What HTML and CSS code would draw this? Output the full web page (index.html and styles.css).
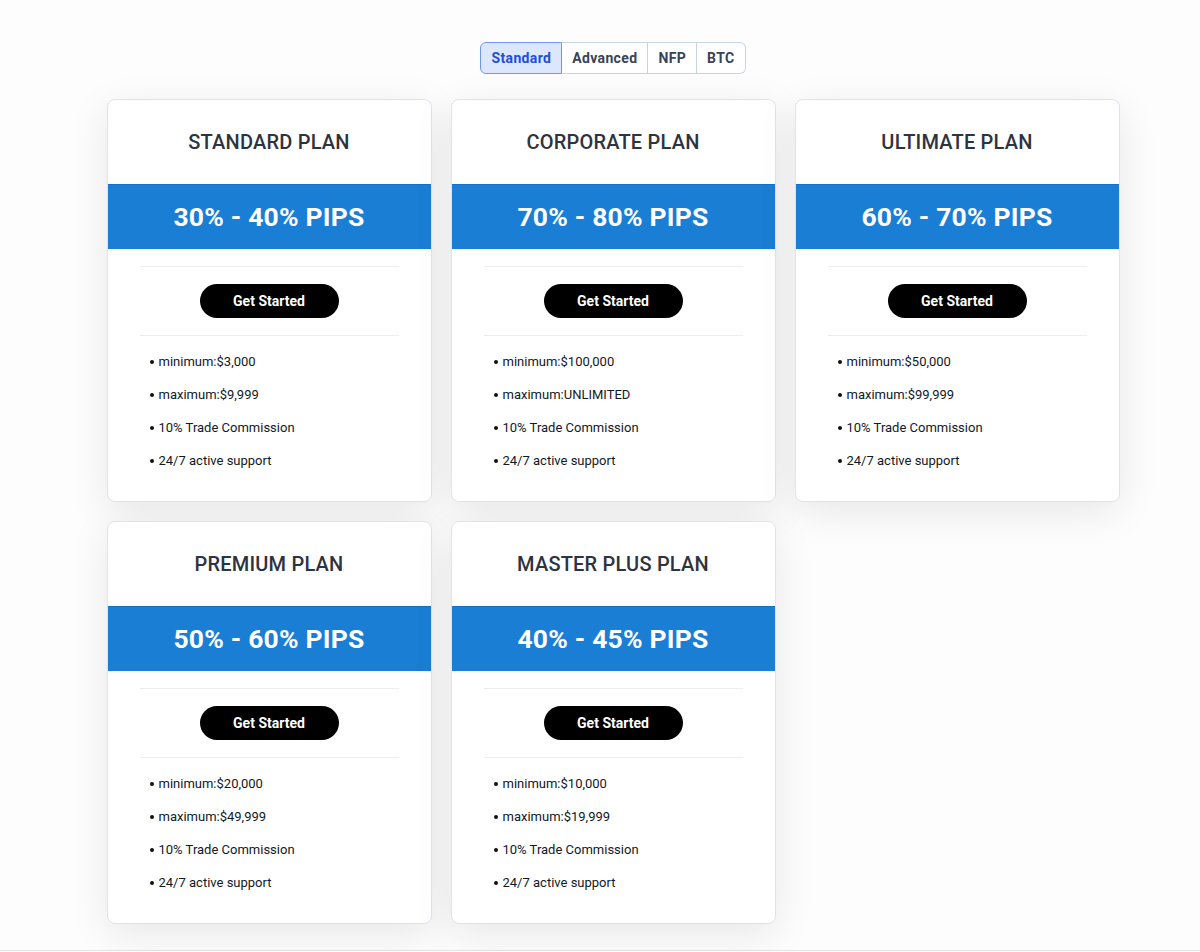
FILE: index.html
```html
<!DOCTYPE html>
<html>
<head>
  <title>Plans</title>
  <link rel="stylesheet" href="styles.css">
</head>
<body>
  <div class="page">
    <div class="tabs">
      <button class="tab active">Standard</button>
      <button class="tab">Advanced</button>
      <button class="tab">NFP</button>
      <button class="tab">BTC</button>
    </div>

    <div class="plans">
      <div class="plan">
        <h3 class="plan-title">STANDARD PLAN</h3>
        <div class="plan-rate">30% - 40% PIPS</div>
        <div class="plan-action"><button class="start">Get Started</button></div>
        <ul class="plan-list">
          <li>minimum:$3,000</li>
          <li>maximum:$9,999</li>
          <li>10% Trade Commission</li>
          <li>24/7 active support</li>
        </ul>
      </div>

      <div class="plan">
        <h3 class="plan-title">CORPORATE PLAN</h3>
        <div class="plan-rate">70% - 80% PIPS</div>
        <div class="plan-action"><button class="start">Get Started</button></div>
        <ul class="plan-list">
          <li>minimum:$100,000</li>
          <li>maximum:UNLIMITED</li>
          <li>10% Trade Commission</li>
          <li>24/7 active support</li>
        </ul>
      </div>

      <div class="plan">
        <h3 class="plan-title">ULTIMATE PLAN</h3>
        <div class="plan-rate">60% - 70% PIPS</div>
        <div class="plan-action"><button class="start">Get Started</button></div>
        <ul class="plan-list">
          <li>minimum:$50,000</li>
          <li>maximum:$99,999</li>
          <li>10% Trade Commission</li>
          <li>24/7 active support</li>
        </ul>
      </div>

      <div class="plan">
        <h3 class="plan-title">PREMIUM PLAN</h3>
        <div class="plan-rate">50% - 60% PIPS</div>
        <div class="plan-action"><button class="start">Get Started</button></div>
        <ul class="plan-list">
          <li>minimum:$20,000</li>
          <li>maximum:$49,999</li>
          <li>10% Trade Commission</li>
          <li>24/7 active support</li>
        </ul>
      </div>

      <div class="plan">
        <h3 class="plan-title">MASTER PLUS PLAN</h3>
        <div class="plan-rate">40% - 45% PIPS</div>
        <div class="plan-action"><button class="start">Get Started</button></div>
        <ul class="plan-list">
          <li>minimum:$10,000</li>
          <li>maximum:$19,999</li>
          <li>10% Trade Commission</li>
          <li>24/7 active support</li>
        </ul>
      </div>
    </div>
  </div>
  <div class="page-end"></div>
</body>
</html>
```

FILE: styles.css
```css
:root {
  --blue: #1a7ed5;
  --blue-edge: #1472c6;
  --text-color: #111827;
  --title-color: #2d3340;
  --border-color: #d6e6f4;
  --rule-color: #eeeeee;
}

body {
  margin: 0;
  background: #fdfdfd;
  font-family: Roboto, 'Liberation Sans', sans-serif;
  color: var(--text-color);
  -webkit-font-smoothing: antialiased;
}

.page {
  width: 1013px;
  margin: 0 auto;
  padding: 42px 0 27px 26px;
  height: 881px;
}

.tabs {
  display: flex;
  justify-content: center;
  margin: 0 0 25px;
}

.tab {
  height: 32px;
  padding: 0 10px;
  background: #ffffff;
  border: 1px solid #c9d3e6;
  border-left: none;
  font-family: inherit;
  font-size: 14px;
  font-weight: 700;
  color: #3a4356;
  letter-spacing: 0.35px;
  cursor: pointer;
}

.tab:first-child {
  border-left: 1px solid #c9d3e6;
  border-radius: 6px 0 0 6px;
}

.tab:last-child {
  border-radius: 0 6px 6px 0;
}

.tab.active {
  background: #dce7fd;
  color: #1d4fd6;
  border: 1px solid #6f97f0;
}

.plans {
  display: grid;
  grid-template-columns: repeat(3, 325px);
  gap: 19px 19px;
}

.plan {
  background: #ffffff;
  border: 1px solid var(--border-color);
  border-radius: 8px;
  box-shadow: 0 10px 40px rgba(0, 0, 0, 0.09);
  height: 401px;
  overflow: hidden;
}

.plan-title {
  margin: 0;
  height: 84px;
  display: flex;
  align-items: center;
  justify-content: center;
  font-size: 20px;
  font-weight: 500;
  letter-spacing: 0.2px;
  color: var(--title-color);
  padding-bottom: 1px;
  box-sizing: border-box;
}

.plan-rate {
  height: 65px;
  display: flex;
  align-items: center;
  justify-content: center;
  background: var(--blue);
  border-top: 1px solid var(--blue-edge);
  box-sizing: border-box;
  color: #ffffff;
  font-size: 26.5px;
  font-weight: 700;
  letter-spacing: 0.2px;
  padding-bottom: 2px;
}

.plan-action {
  margin: 17px 32px 0;
  padding: 17px 0;
  border-top: 1px solid var(--rule-color);
  border-bottom: 1px solid var(--rule-color);
  display: flex;
  justify-content: center;
}

.start {
  width: 139px;
  height: 34px;
  border: none;
  border-radius: 17px;
  background: #000000;
  color: #ffffff;
  font-family: inherit;
  font-size: 14px;
  font-weight: 700;
  cursor: pointer;
}

.plan-list {
  margin: 9px 0 0;
  padding: 0 0 0 50px;
  list-style: none;
  font-size: 13px;
}

.plan-list li {
  height: 33px;
  display: flex;
  align-items: center;
}

.plan-list li::before {
  content: "";
  width: 4px;
  height: 4px;
  border-radius: 50%;
  background: #111111;
  margin: 1px 5px 0 -8px;
}

.page-end {
  border-top: 1px solid #e3e3e3;
}
```
